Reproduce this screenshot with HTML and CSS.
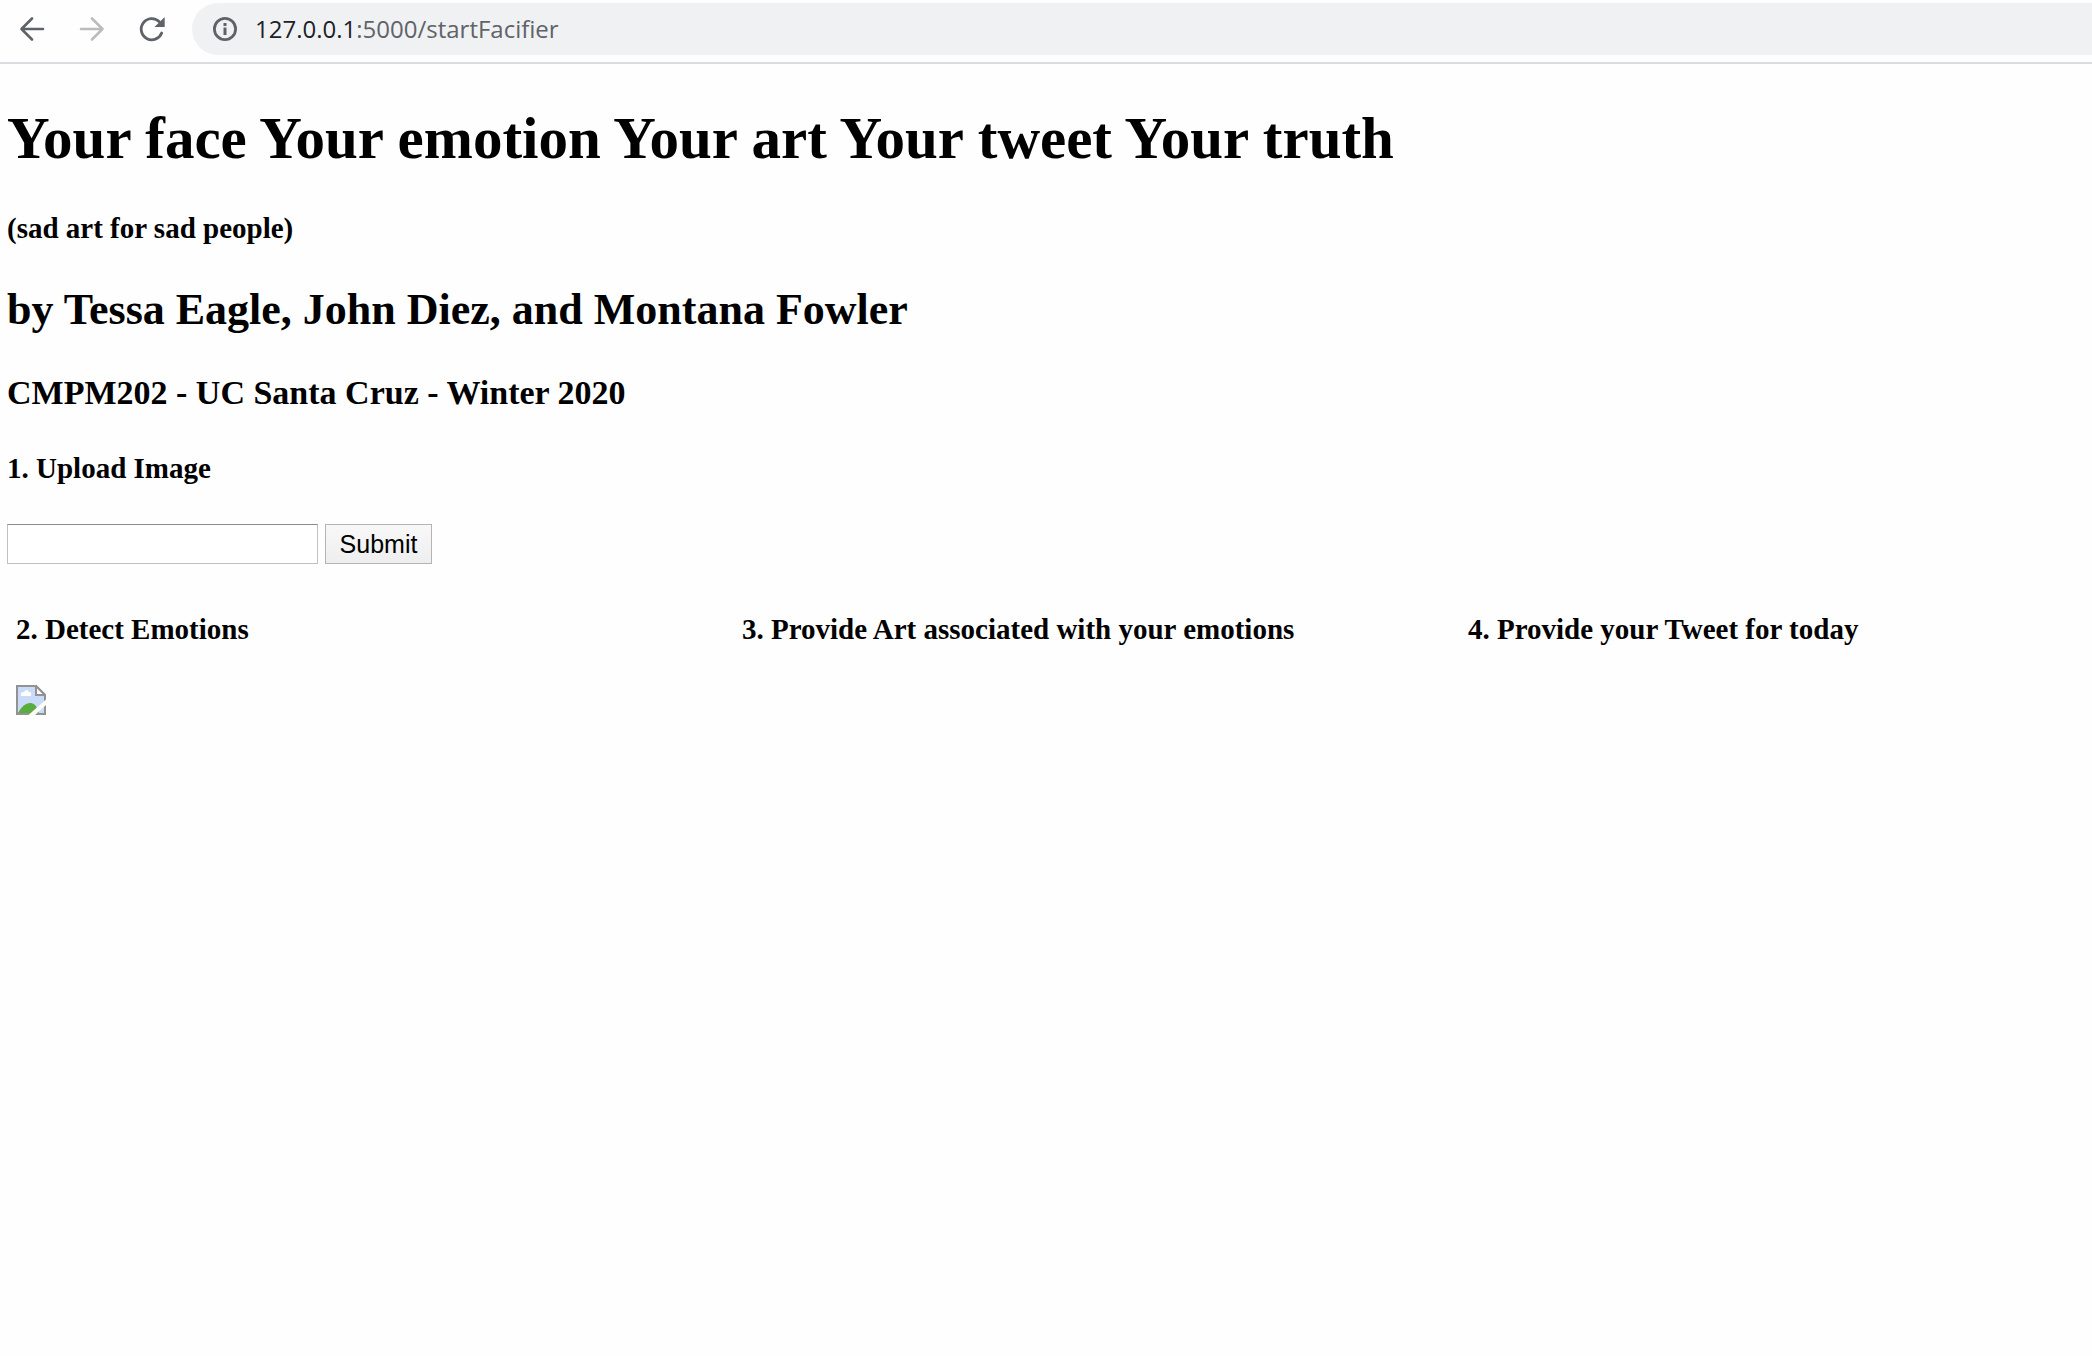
FILE: index.html
```
<!DOCTYPE html>
<html lang="en">
<head>
<meta charset="utf-8">
<title>Facifier</title>
<link rel="stylesheet" href="styles.css">
</head>
<body>
<header class="toolbar">
  <nav class="nav">
    <button class="nav-button" type="button" aria-label="Back">
      <svg width="28" height="28" viewBox="0 0 28 28" fill="none" stroke="#5f6368" stroke-width="2.6" stroke-linecap="round" stroke-linejoin="round"><path d="M25 14H3.5M14 3.5L3.5 14L14 24.500"/></svg>
    </button>
    <button class="nav-button" type="button" aria-label="Forward" disabled>
      <svg width="28" height="28" viewBox="0 0 28 28" fill="none" stroke="#babcbe" stroke-width="2.6" stroke-linecap="round" stroke-linejoin="round"><path d="M3 14H24.500M14 3.500L24.500 14L14 24.500"/></svg>
    </button>
    <button class="nav-button" type="button" aria-label="Reload">
      <svg width="28" height="28" viewBox="0 0 28 28"><path d="M23.700 18A10.600 10.600 0 1 1 21.300 6.700" fill="none" stroke="#5f6368" stroke-width="2.800" stroke-linecap="round"/><path d="M26.700 2V12H16.500Z" fill="#5f6368"/></svg>
    </button>
  </nav>
  <div class="address">
    <svg class="info" width="24" height="24" viewBox="0 0 24 24"><circle cx="12" cy="12" r="10.600" fill="none" stroke="#5f6368" stroke-width="2.800"/><path d="M10.500 6H13.500V9H10.500ZM10.500 10.600H13.500V18H10.500Z" fill="#5f6368"/></svg>
    <span class="url"><span class="host">127.0.0.1</span>:5000/startFacifier</span>
  </div>
</header>
<main class="page">
  <h1>Your face Your emotion Your art Your tweet Your truth</h1>
  <h4>(sad art for sad people)</h4>
  <h2>by Tessa Eagle, John Diez, and Montana Fowler</h2>
  <h3>CMPM202 - UC Santa Cruz - Winter 2020</h3>
  <h4 id="upload-title">1. Upload Image</h4>
  <form class="upload">
    <input class="field" type="text" aria-labelledby="upload-title">
    <button class="submit" type="submit">Submit</button>
  </form>
  <div class="columns">
    <section>
      <h4>2. Detect Emotions</h4>
      <svg class="missing" width="30" height="30" viewBox="0 0 30 30" role="img" aria-label="Missing image">
        <path d="M1 1H20L29 10V29H1Z" fill="#c9dbf8"/>
        <path d="M5 11Q4 7 8 7Q11 3 13 7Q16 7 15 11Z" fill="#fff"/>
        <path d="M2 28Q8 17 15 18Q20 18 23 28Z" fill="#5aac3c"/>
        <path d="M1 1H20L29 10V29H1Z" fill="none" stroke="#929292" stroke-width="2"/>
        <path d="M20 1V10H29Z" fill="#fff" stroke="#929292" stroke-width="2"/>
        <path d="M30 14.500V20L19 30H12.500Z" fill="#fefefe"/>
      </svg>
    </section>
    <section>
      <h4>3. Provide Art associated with your emotions</h4>
    </section>
    <section>
      <h4>4. Provide your Tweet for today</h4>
    </section>
  </div>
</main>
</body>
</html>
```
FILE: styles.css
```
* {
  box-sizing: border-box;
}

body {
  margin: 0;
  background: #fefefe;
  color: #000;
  font-family: "Liberation Serif", "Times New Roman", serif;
  overflow-x: hidden;
}

.toolbar {
  display: flex;
  align-items: center;
  gap: 26px;
  height: 64px;
  padding: 0 0 5px 18px;
  border-bottom: 2px solid #dadce0;
}

.nav {
  display: flex;
  gap: 32px;
}

.nav-button {
  display: flex;
  padding: 0;
  border: 0;
  background: none;
}

.address {
  display: flex;
  flex: 1;
  align-items: center;
  gap: 18px;
  height: 52px;
  margin-top: 1px;
  padding-left: 21px;
  border-radius: 26px 0 0 26px;
  background: #f0f1f3;
}

.url {
  color: #5f6368;
  font: 24px/34px "Open Sans", "Noto Sans", sans-serif;
}

.host {
  color: #202124;
}

.page {
  padding: 40px 7px;
}

h1,
h2,
h3,
h4 {
  margin: 0 0 39px;
  font-weight: bold;
}

h1 {
  font-size: 59px;
  line-height: 68px;
}

h2 {
  font-size: 44px;
  line-height: 51px;
}

h3 {
  font-size: 34px;
  line-height: 38px;
}

h4 {
  font-size: 29px;
  line-height: 34px;
}

.upload {
  display: flex;
  gap: 7px;
  margin: 0 0 48px;
}

.field {
  width: 311px;
  height: 40px;
  border: 1px solid #c0c0c0;
  border-top-color: #8c8c8c;
  background: #fff;
}

.submit {
  width: 107px;
  height: 40px;
  padding: 0;
  border: 1px solid #b4b4b4;
  background: linear-gradient(#f8f8f8, #eee);
  color: #000;
  font: 25px/28px "Liberation Sans", Arial, sans-serif;
}

/* The three equal columns run slightly past the right edge of the window. */
.columns {
  display: grid;
  grid-template-columns: repeat(3, 1fr);
  width: calc(100% + 100px);
}

.columns section {
  padding-left: 9px;
}

.missing {
  display: block;
}
```
